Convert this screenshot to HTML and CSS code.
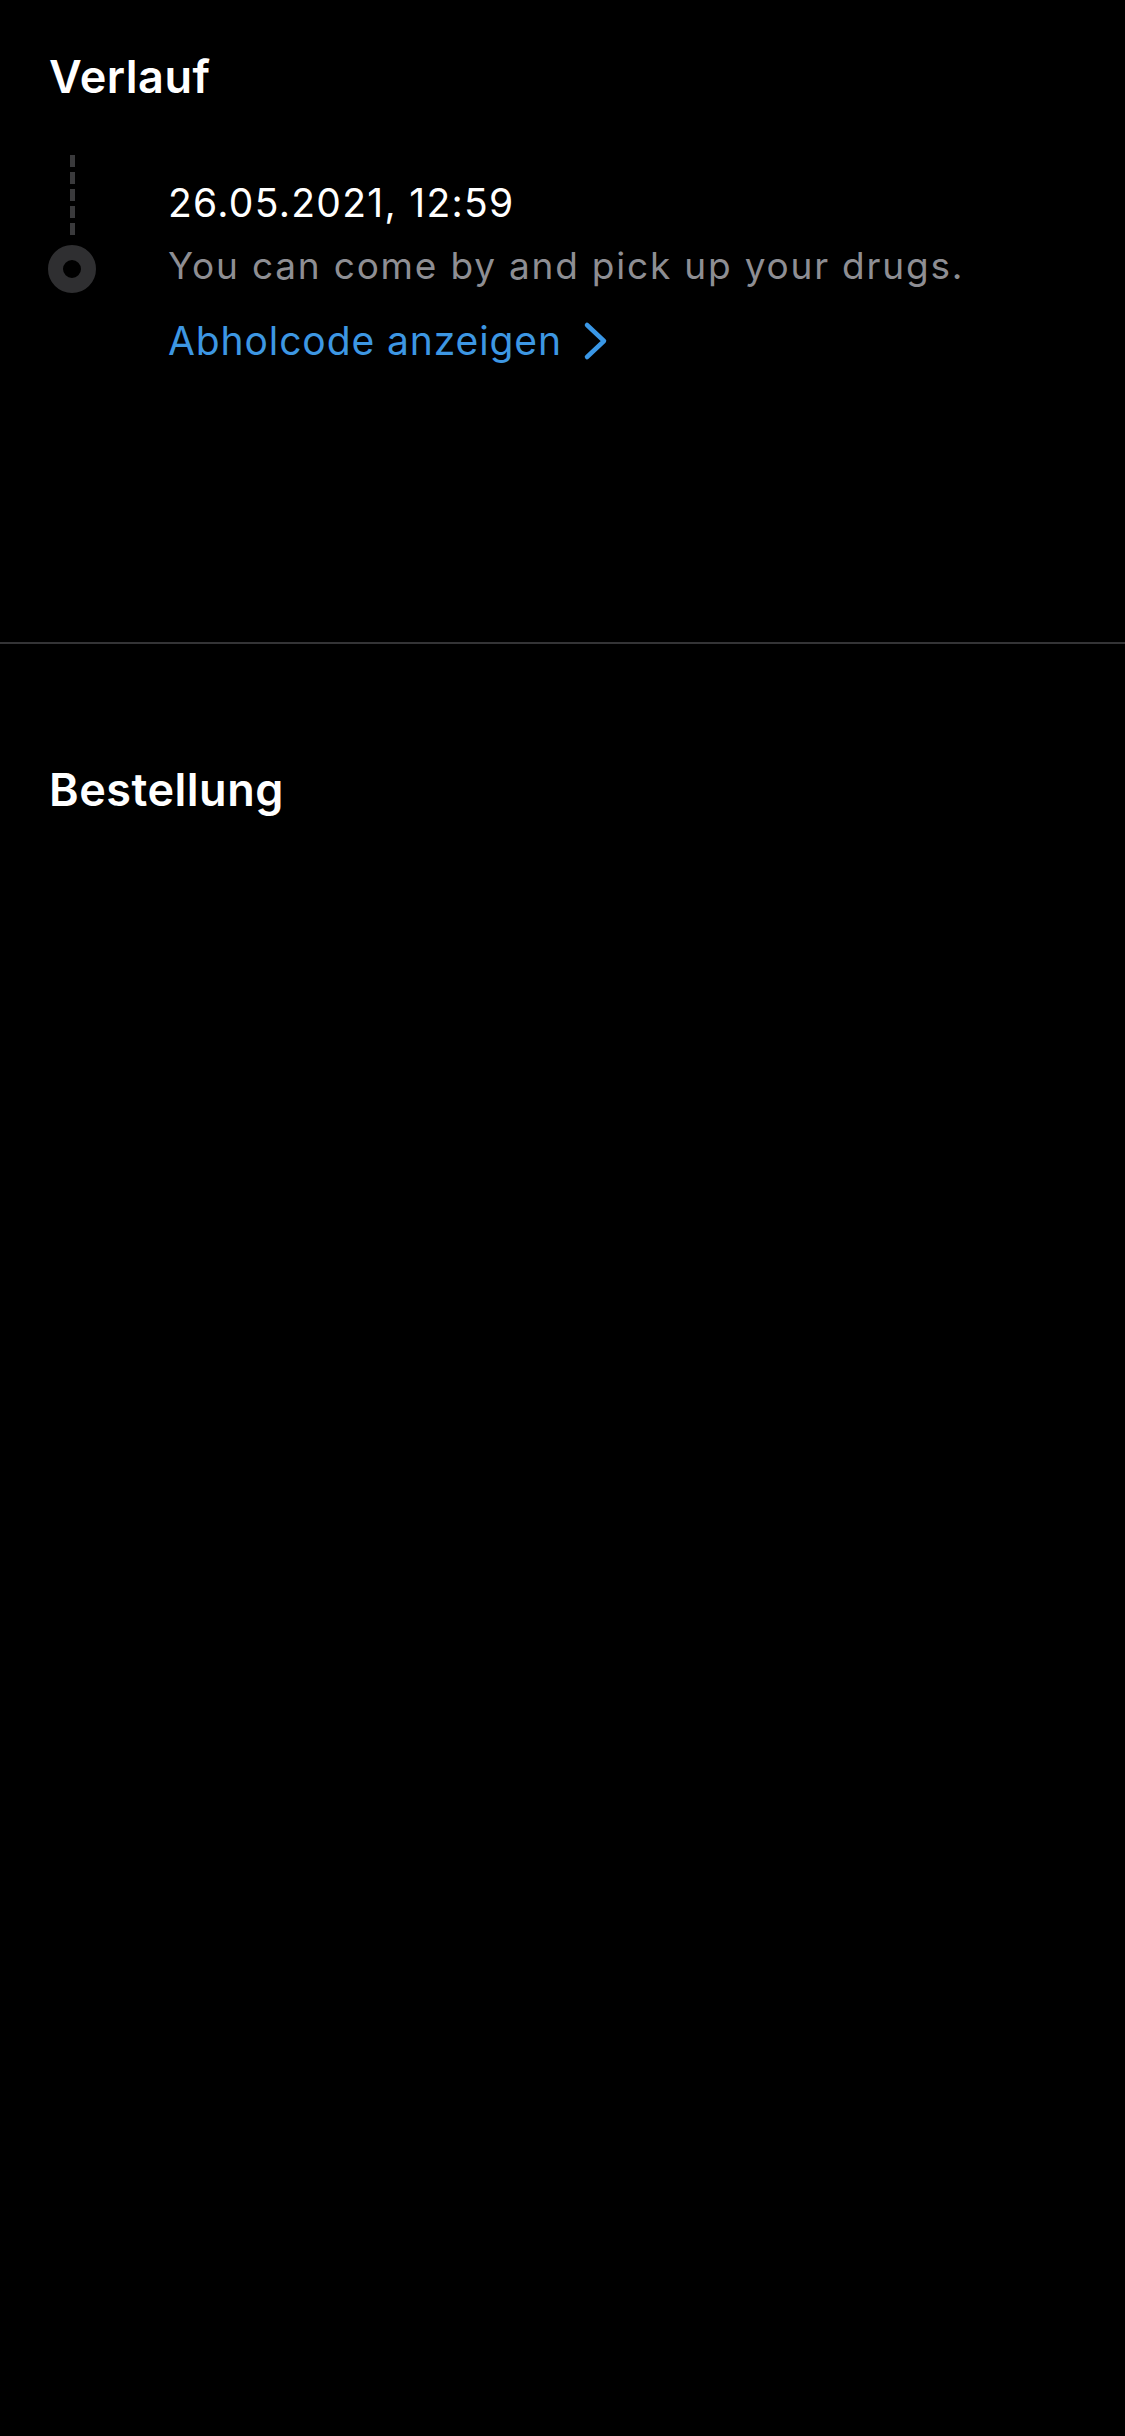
FILE: index.html
```html
<!DOCTYPE html>
<html lang="de">
<head>
<meta charset="utf-8">
<title>Verlauf</title>
<link rel="stylesheet" href="styles.css">
</head>
<body>
<main class="screen">
  <section class="history">
    <h2 class="section-title">Verlauf</h2>
    <div class="event">
      <div class="timeline">
        <div class="dashes"></div>
        <div class="dot"></div>
      </div>
      <div class="event-body">
        <div class="event-date">26.05.2021, 12:59</div>
        <div class="event-text">You can come by and pick up your drugs.</div>
        <a class="event-link" href="#">
          <span>Abholcode anzeigen</span>
          <svg class="chevron" width="26" height="40" viewBox="0 0 26 40" aria-hidden="true">
            <path d="M4 4 L21 20 L4 36" fill="none" stroke="currentColor" stroke-width="4.5" stroke-linecap="round" stroke-linejoin="round"/>
          </svg>
        </a>
      </div>
    </div>
  </section>
  <div class="separator"></div>
  <section class="order">
    <h2 class="section-title">Bestellung</h2>
  </section>
</main>
</body>
</html>
```
FILE: styles.css
```css
html, body {
  margin: 0;
  padding: 0;
  background: #000;
}
body {
  font-family: Inter, "Noto Sans", "Liberation Sans", sans-serif;
  color: #fff;
  min-height: 2436px;
}
.screen {
  display: flex;
  flex-direction: column;
}
.history {
  padding: 50px 50px 277px 48px;
}
.section-title {
  margin: 0;
  font-size: 45px;
  line-height: 54px;
  font-weight: 600;
  letter-spacing: 0.5px;
  color: #fff;
  padding-left: 1px;
}
.event {
  display: flex;
  gap: 72px;
  margin-top: 51px;
}
.timeline {
  width: 48px;
  display: flex;
  flex-direction: column;
  align-items: center;
  gap: 7px;
}
.dashes {
  width: 5px;
  height: 83px;
  background: repeating-linear-gradient(to bottom, #3a3a3c 0 12px, transparent 12px 17px);
}
.dot {
  width: 48px;
  height: 48px;
  box-sizing: border-box;
  border-radius: 50%;
  border: 15px solid #2f2f31;
  background: #000;
}
.event-body {
  padding-top: 24px;
  display: flex;
  flex-direction: column;
  align-items: flex-start;
}
.event-date {
  font-size: 39px;
  line-height: 48px;
  letter-spacing: 1.3px;
  color: #fff;
}
.event-text {
  margin-top: 15px;
  font-size: 37px;
  line-height: 48px;
  letter-spacing: 1.8px;
  color: #8e8e93;
}
.event-link {
  margin-top: 27px;
  display: flex;
  align-items: center;
  gap: 21px;
  font-size: 39px;
  line-height: 48px;
  letter-spacing: 0.9px;
  color: #3d97e3;
  text-decoration: none;
}
.chevron {
  display: block;
  color: #3a97e6;
}
.separator {
  height: 2px;
  background: #343436;
}
.order {
  padding: 119px 50px 0 48px;
}
```
